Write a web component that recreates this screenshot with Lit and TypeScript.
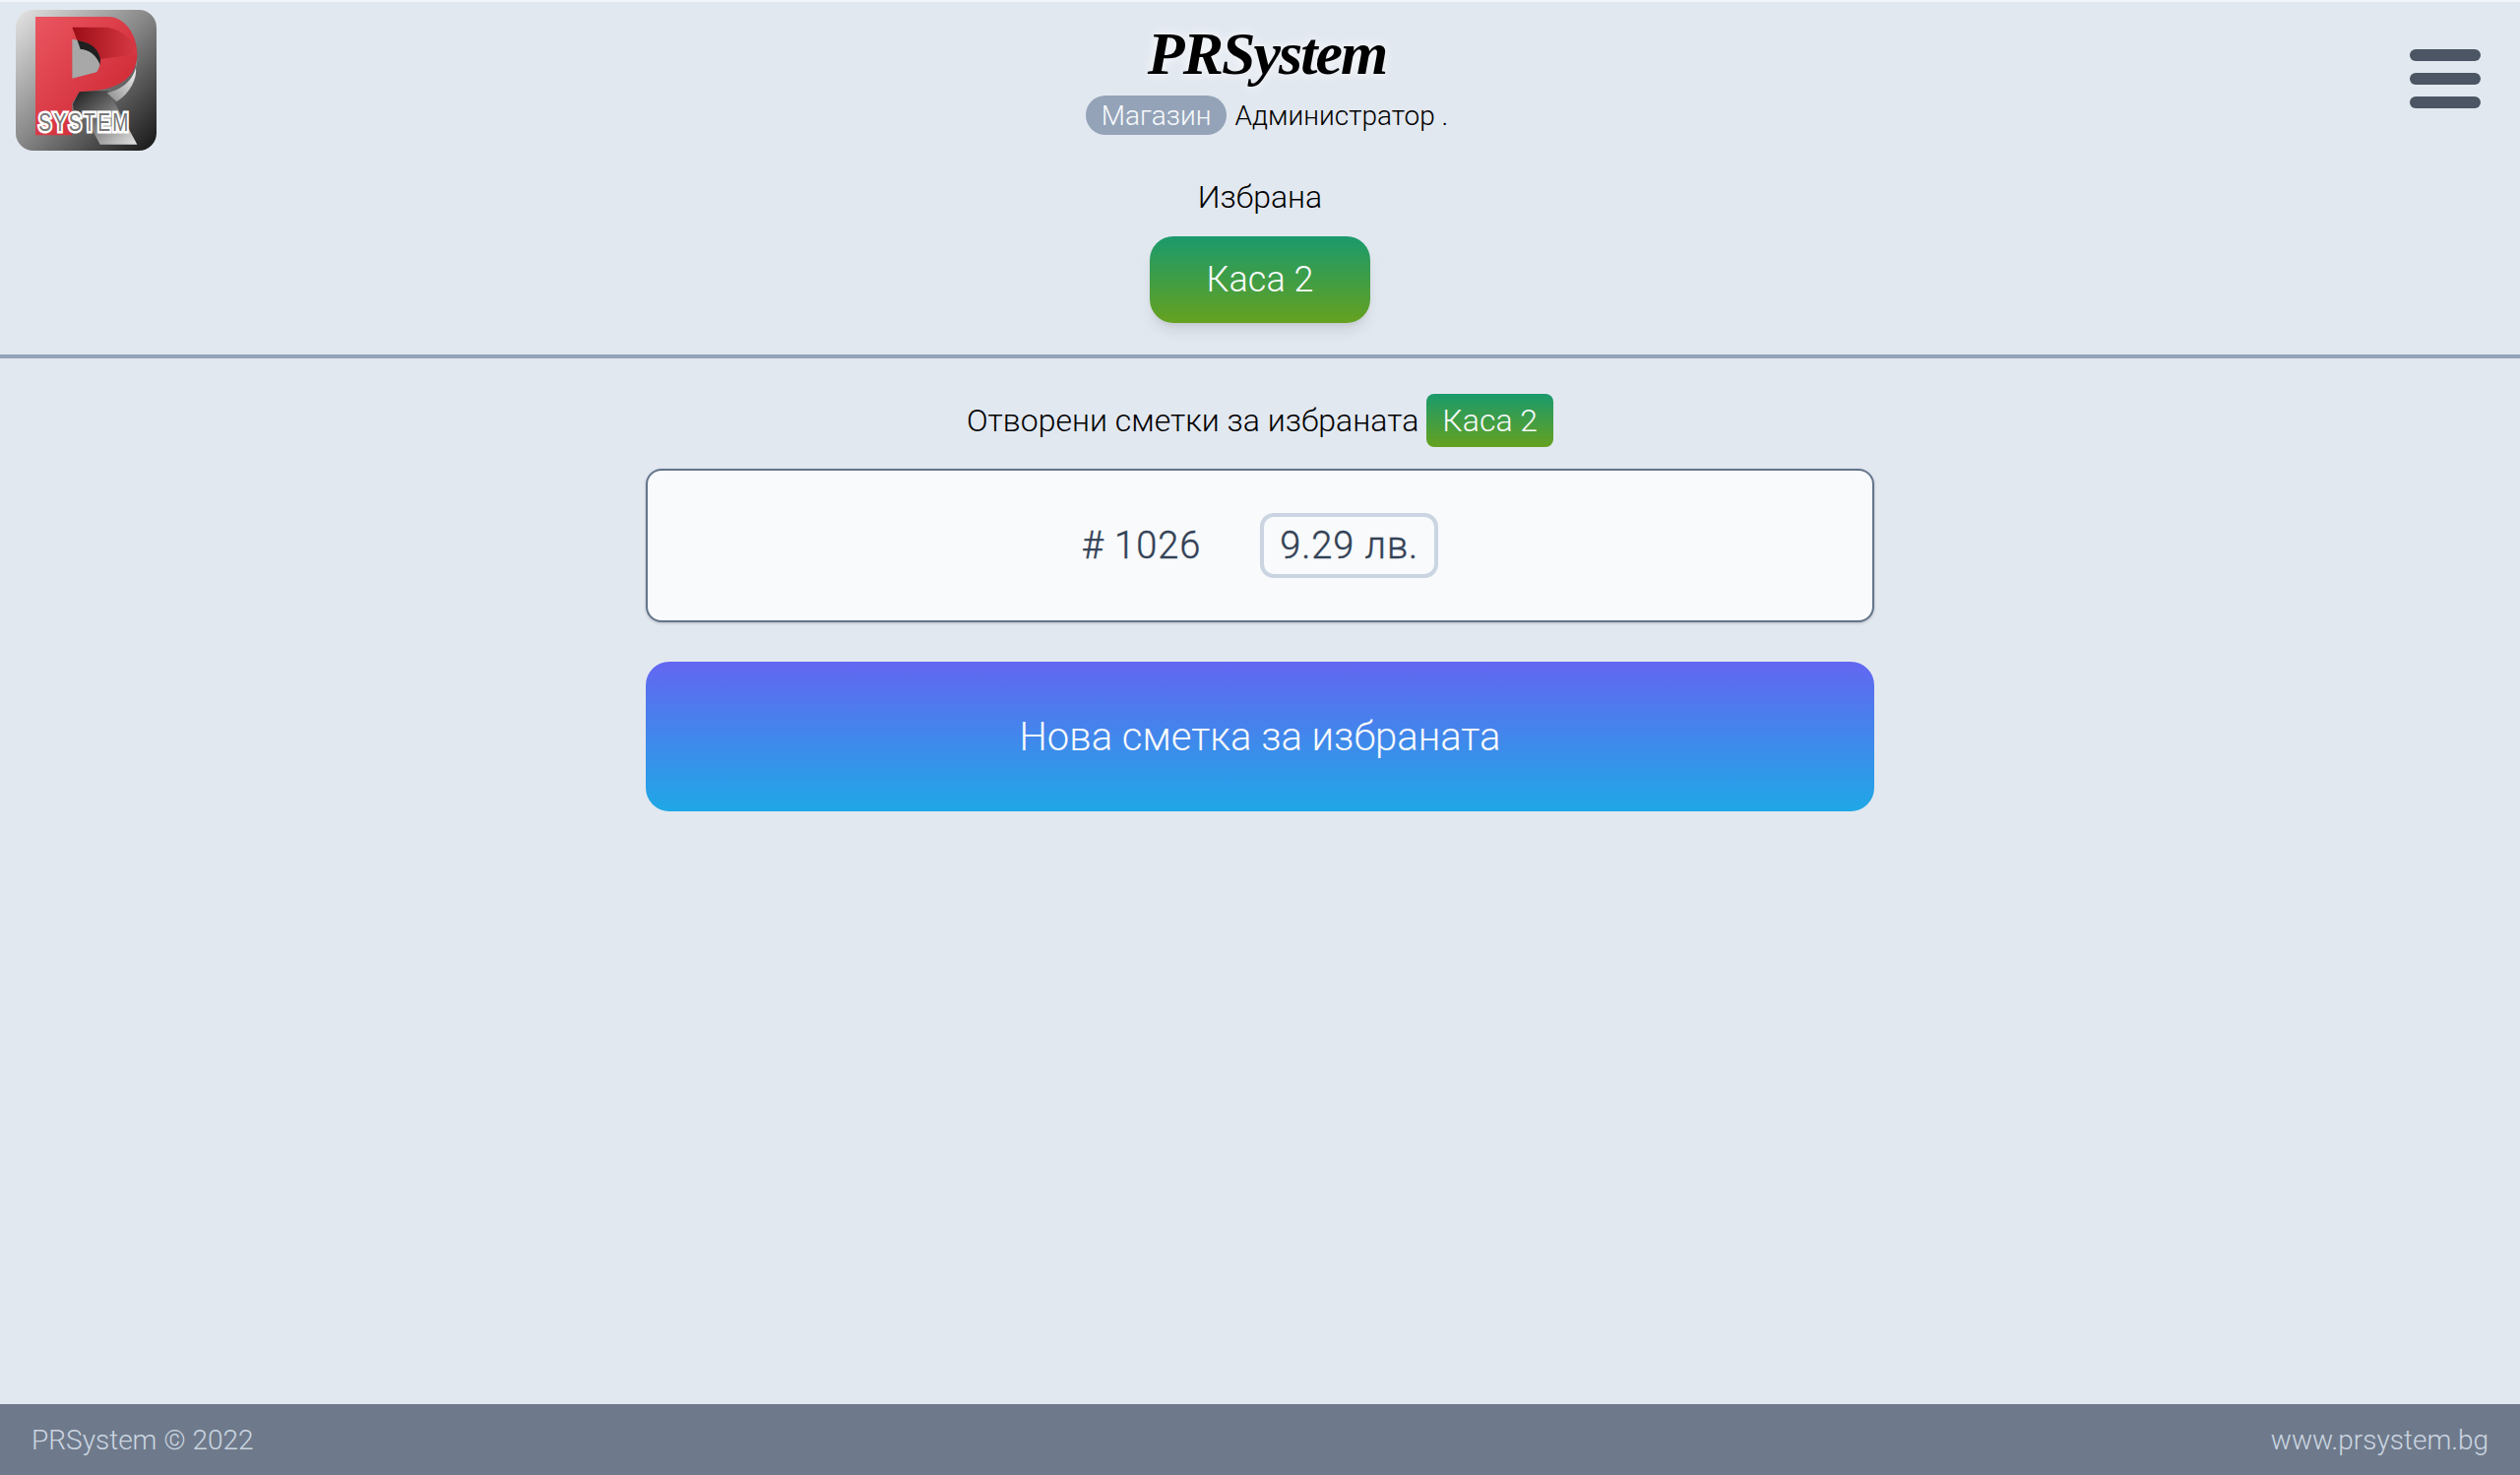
import { LitElement, html, css } from "lit";
import { customElement } from "lit/decorators.js";

@customElement("app-root")
export class AppRoot extends LitElement {
  static styles = css`
    :host { display: flex; flex-direction: column; min-height: 1498px; background: #e2e8f0; font-family: Roboto, sans-serif; font-weight: 300; color: #000; box-sizing: border-box; border-top: 2px solid #f1f5f9; }
    * { box-sizing: border-box; }
    .header { display: grid; grid-template-columns: 1fr auto 1fr; height: 150px; padding: 8px 16px 0; }
    .logo { width: 143px; height: 143px; display: block; }
    .center { display: flex; flex-direction: column; align-items: center; margin-left: 14px; }
    .title { font-family: "Liberation Serif", serif; font-style: italic; font-weight: 700; font-size: 62px; letter-spacing: -2px; line-height: 76px; margin-top: 6px; text-shadow: 0 0 12px #fff; }
    .sub { display: flex; align-items: center; gap: 8px; font-size: 28px; height: 40px; margin-top: 5px; }
    .pill { background: #94a3b8; color: #f8fafc; border-radius: 20px; height: 40px; padding: 0 16px; display: flex; align-items: center; }
    .menu { justify-self: end; display: flex; flex-direction: column; gap: 12px; padding: 40px 24px 0 0; }
    .menu i { display: block; width: 72px; height: 12px; border-radius: 6px; background: #4b5563; }
    .selected { display: flex; flex-direction: column; align-items: center; height: 214px; border-bottom: 4px solid #94a3b8; flex: none; margin-top: -2px; }
    .selected .label { font-size: 32px; line-height: 44px; margin-top: 28px; }
    .kasa { width: 224px; height: 88px; margin-top: 18px; border-radius: 24px; background: linear-gradient(#1a9a6c, #65a11f); color: #f8fafc; font-size: 36px; display: flex; align-items: center; justify-content: center; box-shadow: 0 10px 15px -3px rgba(0,0,0,.1), 0 4px 6px -4px rgba(0,0,0,.1); }
    .main { width: 1248px; align-self: center; display: flex; flex-direction: column; }
    .open { display: flex; justify-content: center; align-items: center; gap: 8px; font-size: 32px; margin-top: 36px; height: 54px; }
    .tag { height: 54px; padding: 0 16px; border-radius: 8px; display: flex; align-items: center; color: #f8fafc; background: linear-gradient(#1a9a6c, #65a11f); }
    .card { height: 156px; margin-top: 22px; background: #f8fafc; border: 2px solid #64748b; border-radius: 16px; box-shadow: 0 1px 3px rgba(0,0,0,.2); display: flex; justify-content: center; align-items: center; gap: 60px; color: #334155; font-size: 38px; font-weight: 300; letter-spacing: .95px; -webkit-text-stroke: .4px #334155; }
    .amount { height: 66px; padding: 0 16px; border: 4px solid #cbd5e1; border-radius: 14px; display: flex; align-items: center; }
    .new { height: 152px; margin-top: 40px; border-radius: 24px; background: linear-gradient(#6366f1, #1fa8e6); color: #f8fafc; font-size: 40px; display: flex; align-items: center; justify-content: center; }
    .footer { margin-top: auto; height: 72px; background: #6e7a8b; color: #cbd5e1; font-size: 28px; display: flex; justify-content: space-between; align-items: center; padding: 0 32px; }
  `;

  render() {
    return html`
      <div class="header">
        <svg class="logo" viewBox="18 15 429 429" aria-label="PRSystem logo">
          <defs>
            <linearGradient id="bg" x1="0" y1="0" x2="1" y2="1">
              <stop offset="0" stop-color="#e4e4e4" /><stop offset=".5" stop-color="#858585" /><stop offset="1" stop-color="#141414" />
            </linearGradient>
            <linearGradient id="red" x1="0" y1="0" x2="1" y2="1">
              <stop offset="0" stop-color="#ea5660" /><stop offset="1" stop-color="#c91f2b" />
            </linearGradient>
            <linearGradient id="band" x1="0" y1="0" x2="1" y2="0">
              <stop offset="0" stop-color="#9c0d16" /><stop offset="1" stop-color="#d83a44" />
            </linearGradient>
            <linearGradient id="leg" x1="0" y1="0" x2="1" y2="1">
              <stop offset="0" stop-color="#1c1c1c" /><stop offset=".45" stop-color="#707070" /><stop offset="1" stop-color="#e6e6e6" />
            </linearGradient>
            <linearGradient id="side" x1="1" y1="0" x2="0" y2="1">
              <stop offset="0" stop-color="#ffffff" /><stop offset="1" stop-color="#8a8a8a" />
            </linearGradient>
          </defs>
          <rect x="18" y="15" width="429" height="429" rx="54" fill="url(#bg)" />
          <path d="M192 302 L212 262 L300 262 L388 425 L275 425 L232 345 L195 322 Z" fill="url(#leg)" />
          <path d="M388 165 C386 215 355 255 296 268 L325 295 C368 268 388 225 384 190 Z" fill="url(#side)" />
          <path d="M190 100 L276 150 L276 180 L265 205 L190 224 Z" fill="#a8a8a8" />
          <path d="M205 106 L262 122 L277 150 L277 188 C266 152 240 136 215 135 Z" fill="#202020" />
          <path fill-rule="evenodd" fill="url(#red)" d="M78 36 L300 36 C350 36 388 90 388 150 C388 215 340 255 250 262 L212 265 L190 300 L190 397 L78 397 Z M190 105 L190 224 L265 205 C275 190 278 170 276 150 C262 120 230 108 190 105 Z" />
          <path d="M190 68 L290 68 C340 72 380 105 388 150 L276 165 C270 130 240 112 205 108 Z" fill="url(#band)" />
          <text transform="translate(88 385) scale(1 1.3)" font-family="'Liberation Sans', sans-serif" font-weight="400" font-size="58" letter-spacing="7" fill="#777" stroke="#fff" stroke-width="12" paint-order="stroke fill">SYSTEM</text>
        </svg>
        <div class="center">
          <div class="title">PRSystem</div>
          <div class="sub"><span class="pill">Магазин</span><span>Администратор .</span></div>
        </div>
        <div class="menu"><i></i><i></i><i></i></div>
      </div>
      <div class="selected">
        <div class="label">Избрана</div>
        <div class="kasa">Каса 2</div>
      </div>
      <div class="main">
        <div class="open"><span>Отворени сметки за избраната</span><span class="tag">Каса 2</span></div>
        <div class="card"><span># 1026</span><span class="amount">9.29 лв.</span></div>
        <div class="new">Нова сметка за избраната</div>
      </div>
      <div class="footer"><span>PRSystem © 2022</span><span>www.prsystem.bg</span></div>
    `;
  }
}
